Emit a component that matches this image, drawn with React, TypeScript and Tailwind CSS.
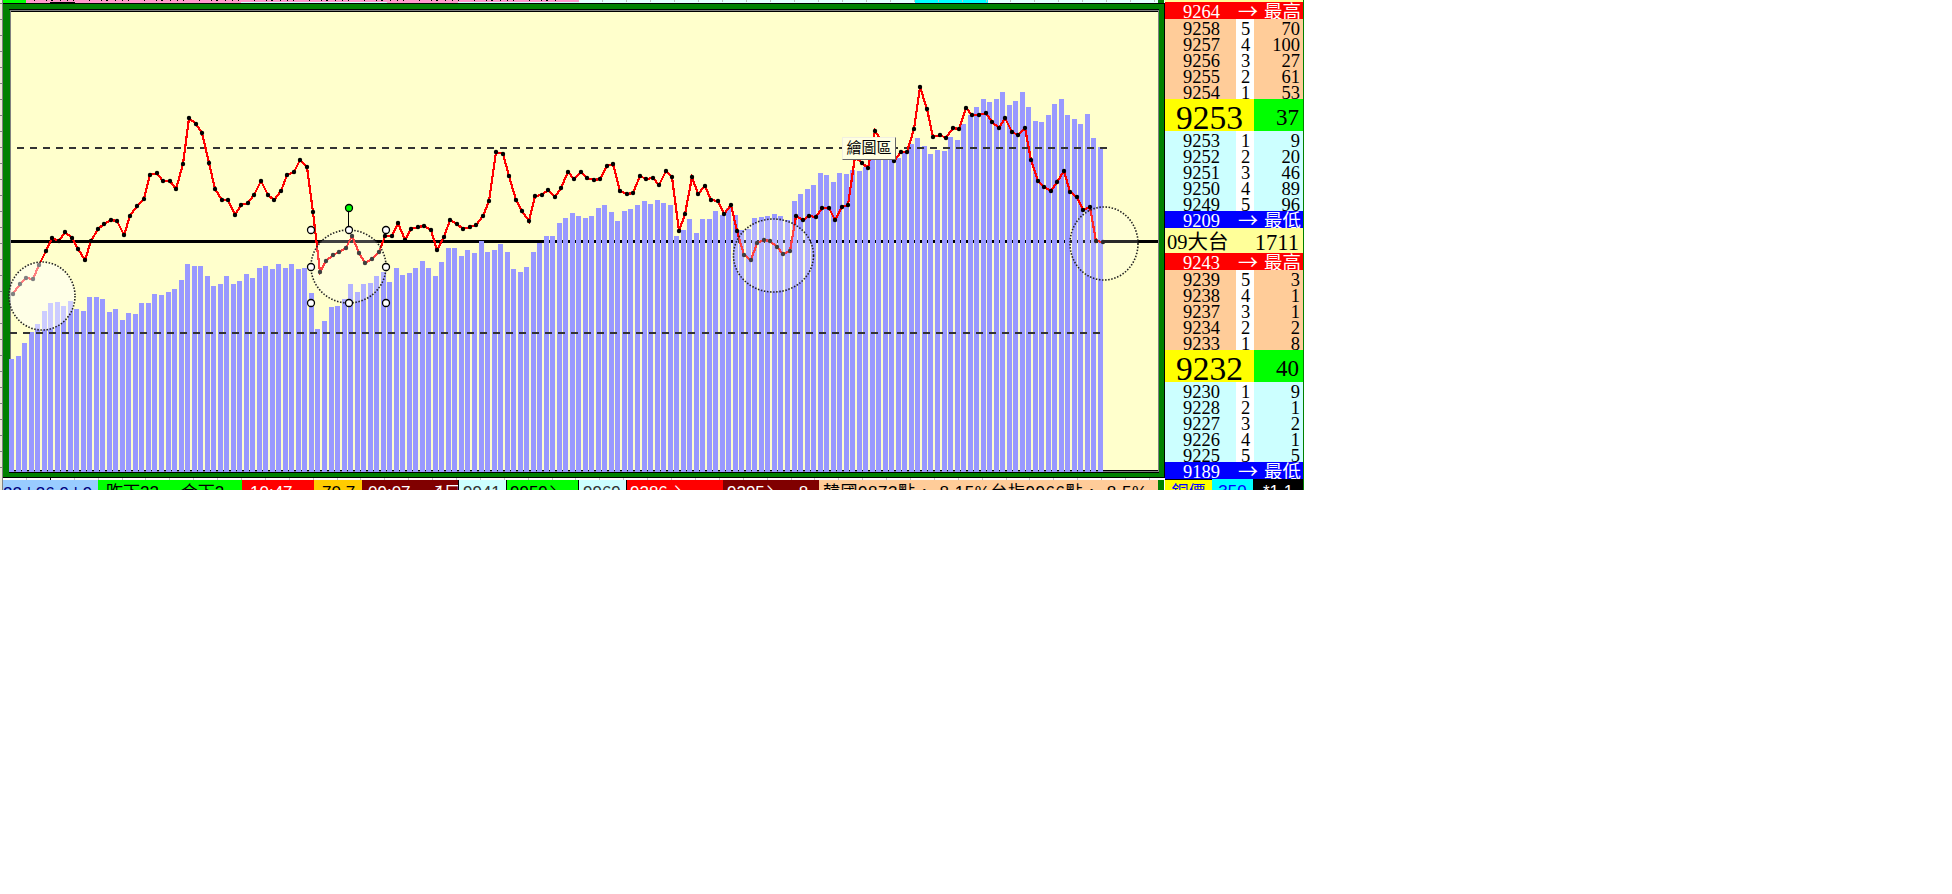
const BAR_TOPS = [
  359, 356, 343, 332, 324, 311, 303, 302, 306, 301, 309, 311, 297, 297, 299, 312, 309, 320, 313, 314, 303, 303, 294, 295,
  292, 289, 280, 264, 266, 266, 276, 286, 284, 276, 284, 281, 274, 278, 268, 266, 269, 264, 268, 264, 269, 268, 293, 329,
  321, 307, 306, 299, 284, 292, 284, 283, 276, 272, 282, 268, 275, 273, 268, 261, 268, 276, 262, 248, 248, 256, 250, 253,
  241, 252, 250, 244, 252, 269, 272, 267, 252, 243, 236, 236, 223, 218, 213, 216, 218, 216, 208, 205, 212, 221, 211, 209,
  205, 201, 204, 200, 203, 205, 236, 230, 219, 233, 219, 219, 211, 215, 208, 215, 230, 229, 218, 217, 216, 214, 216, 220,
  201, 194, 189, 185, 173, 175, 182, 173, 174, 170, 171, 167, 158, 156, 156, 159, 158, 152, 144, 138, 146, 154, 150, 151,
  137, 140, 124, 115, 107, 99, 102, 99, 92, 105, 101, 92, 107, 121, 122, 115, 104, 99, 115, 119, 124, 114, 138, 147,
];

const LINE_YS = [
  294, 284, 278, 279, 265, 251, 238, 241, 232, 238, 249, 260, 241, 229, 224, 220, 221, 235, 216, 206, 199, 175, 173, 181,
  181, 189, 164, 118, 124, 133, 163, 189, 200, 200, 215, 205, 203, 195, 181, 195, 200, 191, 175, 172, 160, 167, 212, 272,
  261, 255, 252, 248, 236, 253, 263, 259, 252, 236, 236, 223, 240, 229, 227, 226, 230, 250, 237, 220, 224, 229, 227, 225,
  216, 201, 152, 154, 176, 200, 211, 221, 196, 195, 190, 197, 188, 172, 179, 172, 178, 180, 179, 166, 164, 191, 194, 193,
  176, 179, 178, 185, 171, 177, 231, 214, 177, 194, 186, 200, 201, 214, 205, 231, 255, 260, 243, 240, 241, 247, 254, 251,
  216, 220, 216, 217, 208, 208, 220, 207, 205, 157, 163, 168, 131, 140, 150, 161, 152, 152, 129, 87, 109, 137, 135, 138,
  128, 129, 108, 115, 115, 113, 122, 128, 118, 132, 135, 128, 160, 181, 187, 191, 182, 171, 192, 197, 210, 207, 241, 242,
];

const barX = (i: number) => Math.round(9 + i * 6.521);
const lineX = (i: number) => Math.round(13 + i * 6.527);

const ELLIPSES = [
  { cx: 42, cy: 296, rx: 33, ry: 34, o: 0.5 },
  { cx: 348.5, cy: 266.5, rx: 37.5, ry: 36.5, o: 0.25 },
  { cx: 773.5, cy: 255.5, rx: 40, ry: 36.5, o: 0.25 },
  { cx: 1104, cy: 243.5, rx: 34, ry: 36.5, o: 0.16 },
];

const HANDLES = [
  [311, 230], [349, 230], [386, 230],
  [311, 267], [386, 267],
  [311, 303], [349, 303], [386, 303],
];

type Row = [string, string, string];

const BOOKS: { high: string; asks: Row[]; last: string; vol: string; bids: Row[]; low: string }[] = [
  {
    high: "9264",
    asks: [["9258", "5", "70"], ["9257", "4", "100"], ["9256", "3", "27"], ["9255", "2", "61"], ["9254", "1", "53"]],
    last: "9253",
    vol: "37",
    bids: [["9253", "1", "9"], ["9252", "2", "20"], ["9251", "3", "46"], ["9250", "4", "89"], ["9249", "5", "96"]],
    low: "9209",
  },
  {
    high: "9243",
    asks: [["9239", "5", "3"], ["9238", "4", "1"], ["9237", "3", "1"], ["9234", "2", "2"], ["9233", "1", "8"]],
    last: "9232",
    vol: "40",
    bids: [["9230", "1", "9"], ["9228", "2", "1"], ["9227", "3", "2"], ["9226", "4", "1"], ["9225", "5", "5"]],
    low: "9189",
  },
];

const CELLS = [
  { text: "22 | 26 9 | 9", cls: "w-[95px] bg-[#99ccff] text-[#000080] pl-0 leading-[28px]" },
  { text: "昨下22　 合下2", cls: "w-[144px] bg-[#00ff00] text-black pl-2" },
  { text: "10:47", cls: "w-[72px] bg-[#ff0000] text-white pl-2" },
  { text: "70.7", cls: "w-[48px] bg-[#ffcc00] text-black pl-2" },
  { text: "09:07　↗口", cls: "w-[96px] bg-[#800000] text-white pl-1.5" },
  { text: "9941", cls: "w-[48px] bg-[#ccffff] text-[#333333] pl-1 border-l border-black" },
  { text: "9959↘", cls: "w-[72px] bg-[#00ff00] text-black pl-[3px] border-l border-black" },
  { text: "9969", cls: "w-[48px] bg-[#ccffff] text-[#333333] pl-1 border-l border-black" },
  { text: "9286 ↘", cls: "w-[97px] bg-[#ff0000] text-white pl-[3px] border-l border-black" },
  { text: "9295↘　8", cls: "w-[96px] bg-[#800000] text-white pl-1" },
  { text: "韓國9873點，-8.15%台指9966點，-8.5%", cls: "w-[339px] bg-[#ffcc99] text-black pl-1 tracking-[0.55px]" },
];

function Chart() {
  return (
    <svg viewBox="3 3 1162 475" className="block h-[475px] w-[1162px]" shapeRendering="crispEdges">
      {/* frame */}
      <rect x="3" y="3" width="1162" height="475" fill="#000" />
      <rect x="3" y="4" width="1161" height="473" fill="#008000" />
      <rect x="9" y="9" width="1150" height="1" fill="#000" />
      <rect x="10" y="10" width="1149" height="463" fill="#808080" />
      <rect x="9" y="472" width="1150" height="1" fill="#000" />
      <rect x="11" y="11" width="1147" height="460" fill="#000" />
      <rect x="11" y="12" width="1147" height="458" fill="#ffffcc" />

      <rect x="11" y="240" width="1147" height="3" fill="#000" />
      {BAR_TOPS.map((y, i) => (
        <rect key={i} x={barX(i)} y={y} width="5" height={472 - y} fill="#9999ff" />
      ))}
      <line x1="17" x2="1107" y1="148" y2="148" stroke="#333" strokeWidth="2" strokeDasharray="7 6.048" />
      <line x1="10" x2="1100" y1="333" y2="333" stroke="#333" strokeWidth="2" strokeDasharray="7 6.048" />

      <polyline points={LINE_YS.map((y, i) => `${lineX(i)},${y}`).join(" ")} fill="none" stroke="#ff0000" strokeWidth="2.2" />

      <g shapeRendering="auto">
        {LINE_YS.map((y, i) => (
          <circle key={i} cx={lineX(i)} cy={y} r="2.2" fill="#000" />
        ))}
        {ELLIPSES.map(({ o, ...e }) => (
          <g key={e.cx}>
            <ellipse {...e} fill="#fff" fillOpacity={o} />
            <ellipse {...e} fill="none" stroke="#222" strokeWidth="1.6" strokeDasharray="1.5 1.6" />
          </g>
        ))}
        {/* selection handles */}
        <line x1="348.5" x2="348.5" y1="210" y2="228" stroke="#000" />
        <circle cx="349" cy="208" r="3.5" fill="#00ff00" stroke="#000" strokeWidth="1.3" />
        {HANDLES.map(([x, y]) => (
          <circle key={`${x}-${y}`} cx={x} cy={y} r="3.5" fill="#fff" stroke="#000" strokeWidth="1.3" />
        ))}
      </g>
    </svg>
  );
}

function Limit({ price, label, cls }: { price: string; label: string; cls: string }) {
  return (
    <div className={`flex overflow-hidden text-white ${cls}`}>
      <span className="w-[73px] text-center">{price}</span>
      <span className="w-[26px] font-['Noto_Sans_CJK_TC',sans-serif] text-[20px] leading-[17px]">→</span>
      <span className="flex-1 whitespace-nowrap">{label}</span>
    </div>
  );
}

function Rows({ rows, cls }: { rows: Row[]; cls: string }) {
  return (
    <div className={cls}>
      {rows.map(([price, n, qty]) => (
        <div key={price} className="flex h-4 overflow-hidden leading-[20px]">
          <span className="w-[71px] pl-[2px] text-center">{price}</span>
          <span className="w-[18px] bg-white pl-px text-center">{n}</span>
          <span className="flex-1 pr-[3px] text-right">{qty}</span>
        </div>
      ))}
    </div>
  );
}

function Book({ book }: { book: (typeof BOOKS)[number] }) {
  return (
    <div>
      <Limit price={book.high} label="最高" cls="h-[17px] leading-[20px] bg-[#ff0000]" />
      <Rows rows={book.asks} cls="bg-[#ffcc99]" />
      <div className="flex h-8 overflow-hidden">
        <span className="w-[89px] bg-[#ffff00] text-center text-[33.5px] leading-[37px]">{book.last}</span>
        <span className="flex-1 bg-[#00ff00] pr-[4px] text-right text-[23px] leading-[37px]">{book.vol}</span>
      </div>
      <Rows rows={book.bids} cls="bg-[#ccffff]" />
      <Limit price={book.low} label="最低" cls="h-[17px] leading-[20px] bg-[#0000ff]" />
    </div>
  );
}

export default function App() {
  return (
    <div className="h-[894px] w-full overflow-hidden bg-white">
      <div className="flex h-[490px] w-[1304px] overflow-hidden">
        {/* row headers */}
        <div className="h-full w-[3px] border-r border-[#808080] bg-[#ece9d8] pt-[3px]">
          {Array.from({ length: 30 }, (_, i) => (
            <div key={i} className="h-4 border-t border-[#808080]" />
          ))}
        </div>

        <div className="relative flex w-[1162px] flex-col">
          <div className="flex h-[3px]">
            <div className="w-[23px] bg-[#00ff00]" />
            <div className="w-[553px] bg-[#ff99cc]">
              <svg className="block h-[3px] w-[553px]" viewBox="26 0 553 3" shapeRendering="crispEdges">
                <path d="M34 .5H560" stroke="#000" strokeDasharray="1 11 1 4 2 7 1 6 1 5 1 15" />
                <path d="M50 2.5H75" stroke="#000" />
                <path d="M241 2.5H387M458 2.5H579" stroke="#ccffff" />
              </svg>
            </div>
            <div className="flex-1 bg-[#e6ffff]">
              <svg className="block h-[3px] w-[586px]" viewBox="579 0 586 3" shapeRendering="crispEdges">
                <rect x="915" width="73" height="3" fill="#00ffff" />
                <path d="M602 1H1155" stroke="#c0c0c0" strokeWidth="2" strokeDasharray="1 23" />
                <rect x="1158" width="6" height="3" fill="#008000" />
              </svg>
            </div>
          </div>
          <Chart />
          <div className="flex h-[2px] justify-between bg-white pl-[23px] pr-[15px]">
            {Array.from({ length: 48 }, (_, i) => (
              <div key={i} className={i === 1 ? "w-px bg-black" : "w-px bg-[#c0c0c0]"} />
            ))}
          </div>
          <div className="flex h-[10px] overflow-hidden whitespace-pre pr-px font-['Liberation_Sans','Noto_Sans_CJK_TC',sans-serif] text-[17px] leading-[26px]">
            {CELLS.map((c) => (
              <div key={c.text} className={`shrink-0 overflow-hidden ${c.cls}`}>
                {c.text}
              </div>
            ))}
            <div className="flex-1 bg-[#008000]" />
          </div>
          <div className="absolute left-[839px] top-[137px] flex h-[23px] w-[54px] items-center justify-center border border-b-[#666666] border-l-[#f1efe2] border-r-[#666666] border-t-[#f1efe2] bg-[#ffffe1] pb-[4px] font-['Noto_Sans_CJK_TC',sans-serif] text-[15px] leading-none text-black">
            繪圖區
          </div>
        </div>

        <div className="flex w-[139px] flex-col border-r border-[#008000] font-['Liberation_Serif','Noto_Sans_CJK_TC',serif] text-[18.5px] text-black">
          <div className="h-[2px] shrink-0 bg-[#ffff99]" />
          <Book book={BOOKS[0]} />
          <div className="flex h-[25px] shrink-0 justify-between overflow-hidden bg-[#ffff99] pl-[2px] pr-[4px] leading-[29px]">
            <span className="text-[20.5px]">09大台</span>
            <span className="text-[22.5px]">1711</span>
          </div>
          <Book book={BOOKS[1]} />
          <div className="flex h-[11px] shrink-0 overflow-hidden whitespace-nowrap font-['Liberation_Sans','Noto_Sans_CJK_TC',sans-serif] text-[17px] leading-[26px]">
            <span className="w-[47px] border-t border-black bg-[#ffff00] text-center text-[#0000ff]">銅價</span>
            <span className="w-[41px] bg-[#00ffff] text-center text-[#0000ff]">350</span>
            <span className="flex-1 bg-black text-center text-white">*1 1</span>
          </div>
        </div>
      </div>
    </div>
  );
}
